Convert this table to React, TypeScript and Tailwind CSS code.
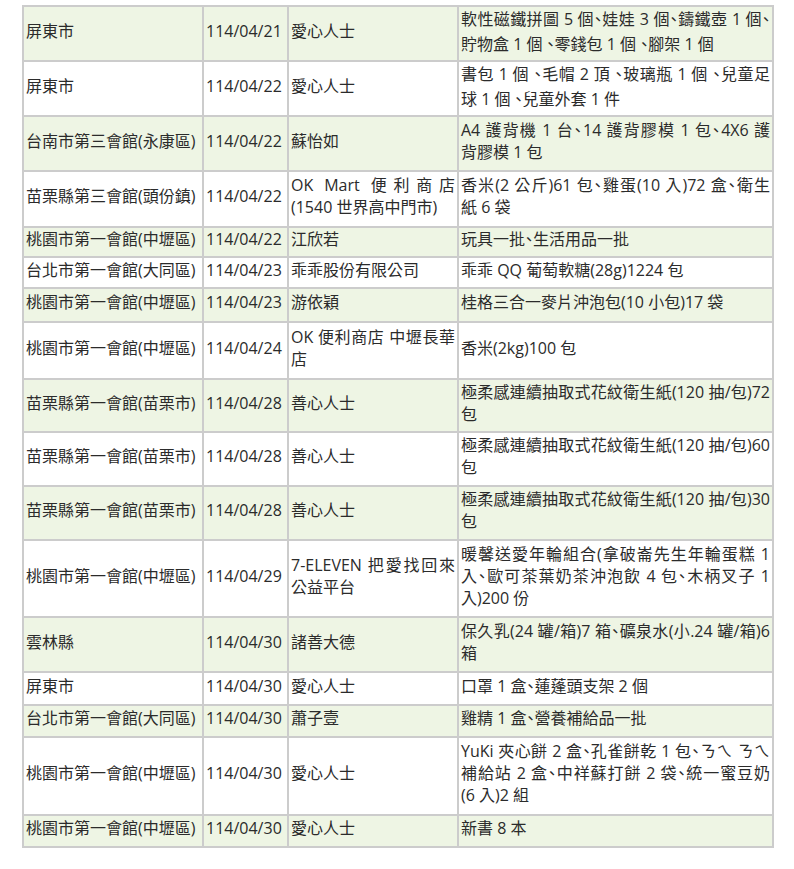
import React from 'react';

type Row = {
  place: string;
  date: string;
  donor: string[];
  items: string[];
  h: string;
  loose?: boolean;
};

const rows: Row[] = [
  { place: '屏東市', date: '114/04/21', donor: ['愛心人士'], items: ['軟性磁鐵拼圖 5 個、娃娃 3 個、鑄鐵壺 1 個、', '貯物盒 1 個 、零錢包 1 個 、腳架 1 個'], h: 'h-[55px]', loose: true },
  { place: '屏東市', date: '114/04/22', donor: ['愛心人士'], items: ['書包 1 個 、毛帽 2 頂 、玻璃瓶 1 個 、兒童足', '球 1 個 、兒童外套 1 件'], h: 'h-[54px]', loose: true },
  { place: '台南市第三會館(永康區)', date: '114/04/22', donor: ['蘇怡如'], items: ['A4 護背機 1 台、14 護背膠模 1 包、4X6 護', '背膠模 1 包'], h: 'h-[55px]' },
  { place: '苗栗縣第三會館(頭份鎮)', date: '114/04/22', donor: ['OK Mart 便利商店', '(1540 世界高中門市)'], items: ['香米(2 公斤)61 包、雞蛋(10 入)72 盒、衛生', '紙 6 袋'], h: 'h-[56px]' },
  { place: '桃園市第一會館(中壢區)', date: '114/04/22', donor: ['江欣若'], items: ['玩具一批、生活用品一批'], h: 'h-[30px]' },
  { place: '台北市第一會館(大同區)', date: '114/04/23', donor: ['乖乖股份有限公司'], items: ['乖乖 QQ 葡萄軟糖(28g)1224 包'], h: 'h-[31px]' },
  { place: '桃園市第一會館(中壢區)', date: '114/04/23', donor: ['游依穎'], items: ['桂格三合一麥片沖泡包(10 小包)17 袋'], h: 'h-[34px]' },
  { place: '桃園市第一會館(中壢區)', date: '114/04/24', donor: ['OK 便利商店 中壢長華', '店'], items: ['香米(2kg)100 包'], h: 'h-[57px]' },
  { place: '苗栗縣第一會館(苗栗市)', date: '114/04/28', donor: ['善心人士'], items: ['極柔感連續抽取式花紋衛生紙(120 抽/包)72', '包'], h: 'h-[53px]' },
  { place: '苗栗縣第一會館(苗栗市)', date: '114/04/28', donor: ['善心人士'], items: ['極柔感連續抽取式花紋衛生紙(120 抽/包)60', '包'], h: 'h-[54px]' },
  { place: '苗栗縣第一會館(苗栗市)', date: '114/04/28', donor: ['善心人士'], items: ['極柔感連續抽取式花紋衛生紙(120 抽/包)30', '包'], h: 'h-[54px]' },
  { place: '桃園市第一會館(中壢區)', date: '114/04/29', donor: ['7-ELEVEN 把愛找回來', '公益平台'], items: ['暖馨送愛年輪組合(拿破崙先生年輪蛋糕 1', '入、歐可茶葉奶茶沖泡飲 4 包、木柄叉子 1', '入)200 份'], h: 'h-[77px]' },
  { place: '雲林縣', date: '114/04/30', donor: ['諸善大德'], items: ['保久乳(24 罐/箱)7 箱、礦泉水(小.24 罐/箱)6', '箱'], h: 'h-[55px]' },
  { place: '屏東市', date: '114/04/30', donor: ['愛心人士'], items: ['口罩 1 盒、蓮蓬頭支架 2 個'], h: 'h-[33px]' },
  { place: '台北市第一會館(大同區)', date: '114/04/30', donor: ['蕭子壹'], items: ['雞精 1 盒、營養補給品一批'], h: 'h-[32px]' },
  { place: '桃園市第一會館(中壢區)', date: '114/04/30', donor: ['愛心人士'], items: ['YuKi 夾心餅 2 盒、孔雀餅乾 1 包、ㄋㄟ ㄋㄟ', '補給站 2 盒、中祥蘇打餅 2 袋、統一蜜豆奶', '(6 入)2 組'], h: 'h-[78px]' },
  { place: '桃園市第一會館(中壢區)', date: '114/04/30', donor: ['愛心人士'], items: ['新書 8 本'], h: 'h-[32px]' },
];

// every line but the last is stretched to the full cell width
const Lines: React.FC<{ lines: string[] }> = ({ lines }) => (
  <>
    {lines.map((l, i) => (
      <div
        key={i}
        className={
          i < lines.length - 1
            ? 'whitespace-nowrap text-justify [text-align-last:justify]'
            : 'whitespace-nowrap'
        }
      >
        {l}
      </div>
    ))}
  </>
);

const cell = 'border-2 border-[#cccccc] px-[2px] pt-0 pb-[6px] align-middle';

export default function App() {
  return (
    <div className="min-h-screen bg-white pl-[22px] pt-[5px] font-['Open_Sans','Noto_Sans_CJK_TC',sans-serif] text-[16px] leading-[22px] text-[#2b2b2b]">
      <table className="w-[750px] table-fixed border-collapse">
        <colgroup>
          <col className="w-[180px]" />
          <col className="w-[85px]" />
          <col className="w-[170px]" />
          <col className="w-[315px]" />
        </colgroup>
        <tbody>
          {rows.map((r, i) => (
            <tr key={i} className={`${r.h} ${i % 2 === 0 ? 'bg-[#eef5e4]' : 'bg-white'}`}>
              <td className={cell}>{r.place}</td>
              <td className={cell}>{r.date}</td>
              <td className={cell}>
                <Lines lines={r.donor} />
              </td>
              <td
                className={
                  r.loose
                    ? 'border-2 border-[#cccccc] px-[2px] pt-0 pb-[3px] align-middle leading-[25px] [font-feature-settings:"halt"]'
                    : cell + ' [font-feature-settings:"halt"]'
                }
              >
                <Lines lines={r.items} />
              </td>
            </tr>
          ))}
        </tbody>
      </table>
    </div>
  );
}
